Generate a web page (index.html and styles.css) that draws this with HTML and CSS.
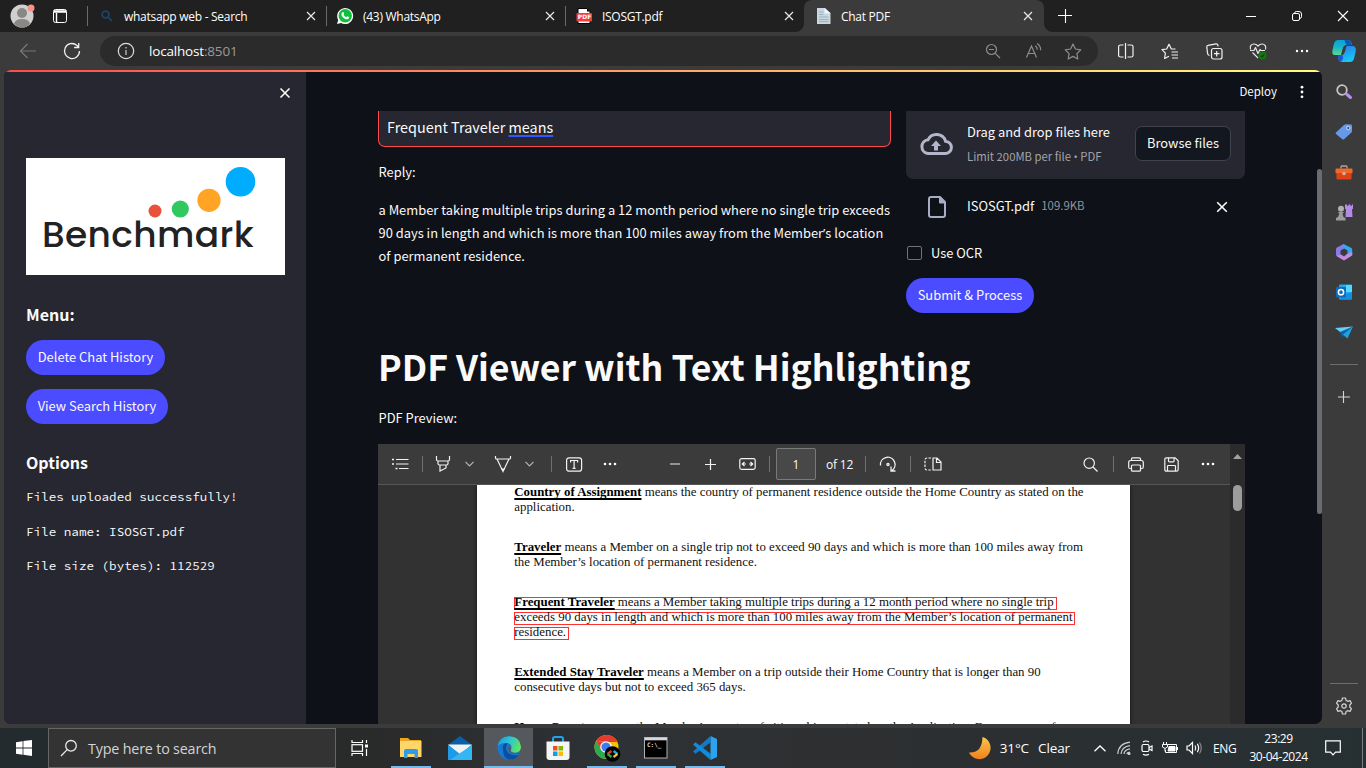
FILE: index.html
```html
<!DOCTYPE html>
<html lang="en">
<head>
<meta charset="utf-8">
<title>Chat PDF</title>
<link rel="stylesheet" href="styles.css">
</head>
<body>
<div class="tabbar">
  <div class="profile"><svg width="26" height="26" viewBox="0 0 26 26"><circle cx="12" cy="14" r="11.5" fill="#d2d0ce"/><circle cx="12" cy="11" r="5" fill="#8a8886"/><path d="M4 22q1-5 8-5t8 5q-3.500 3.500-8 3.500T4 22z" fill="#8a8886"/><circle cx="21" cy="6" r="3.500" fill="#f9938a"/></svg></div>
  <div class="workspace"><svg width="16" height="16" viewBox="0 0 16 16" fill="none" stroke="#fff"><rect x="1.500" y="1.500" width="13" height="13" rx="2"/><path d="M2 3h12M2 4h12M4.500 5v9" stroke-width="1.400"/></svg></div>
  <div class="tab"><svg class="fav" width="16" height="16" viewBox="0 0 16 16" fill="none" stroke="#1c4468" stroke-width="1.800"><circle cx="7.500" cy="6.500" r="3.400"/><path d="M10 9.200l4 4"/></svg><span class="tab-title">whatsapp web - Search</span><svg class="x" width="10" height="10" viewBox="0 0 10 10"><path d="M1 1l8 8M9 1l-8 8"/></svg></div>
  <div class="tab"><svg class="fav" width="16" height="16" viewBox="0 0 16 16"><path d="M0 16l1.200-4A8 8 0 1 1 4 14.900z" fill="#fff"/><circle cx="8.200" cy="7.800" r="6.700" fill="#0fbf3b"/><path d="M5.500 4.200c.8-.5 1.200 0 1.700 1.500l-.6 1c.7 1.300 1.500 2 2.800 2.600l1-1c1.500.6 2 1 1.600 2-1.500 2-4.500.8-6.300-1.300C4 7.200 4 5.200 5.500 4.200z" fill="#fff"/></svg><span class="tab-title">(43) WhatsApp</span><svg class="x" width="10" height="10" viewBox="0 0 10 10"><path d="M1 1l8 8M9 1l-8 8"/></svg></div>
  <div class="tab"><svg class="fav" width="16" height="16" viewBox="0 0 16 16"><path d="M2 .5h9l3 3v12H2z" fill="#fff" stroke="#000"/><path d="M11 .5v3h3z" fill="#000"/><rect x=".5" y="5" width="15.500" height="8.500" rx="1" fill="#f53c3c"/><text x="1.800" y="11.300" class="pdf-mark">PDF</text></svg><span class="tab-title">ISOSGT.pdf</span><svg class="x" width="10" height="10" viewBox="0 0 10 10"><path d="M1 1l8 8M9 1l-8 8"/></svg></div>
  <div class="tab active"><svg class="fav" width="16" height="16" viewBox="0 0 16 16"><path d="M2 0h8l5.500 5v11H2z" fill="#c8d8e0"/><path d="M9.500 0l6 5.500h-6z" fill="#eef6fa"/><path d="M4 4h4.500M4 6.500h4.500M4 9h9.500M4 11.500h9.500M4 13.500h9.500" stroke="#9cb3bf"/></svg><span class="tab-title">Chat PDF</span><svg class="x" width="10" height="10" viewBox="0 0 10 10"><path d="M1 1l8 8M9 1l-8 8"/></svg></div>
  <div class="newtab"><svg width="14" height="14" viewBox="0 0 14 14"><path d="M7.500 0v14M0 6.500h14" stroke="#fff" stroke-width="1.100"/></svg></div>
  <div class="winbtns">
    <div><svg width="10" height="10" viewBox="0 0 10 10"><path d="M0 5.500h10" stroke="#fff"/></svg></div>
    <div><svg width="10" height="10" viewBox="0 0 10 10" fill="none" stroke="#fff"><rect x=".5" y="2.500" width="7" height="7" rx="1.500"/><path d="M2.500 2.300Q2.700.5 4.300.5H7q2.500 0 2.500 2.500v2.700q0 1.600-1.800 1.800"/></svg></div>
    <div><svg width="10" height="10" viewBox="0 0 10 10"><path d="M0 0l10 10M10 0L0 10" stroke="#fff" stroke-width="1.100"/></svg></div>
  </div>
</div>

<div class="toolbar">
  <div class="nav first"><svg width="18" height="16" viewBox="0 0 18 16" fill="none" stroke="#777" stroke-width="1.200"><path d="M17 8H1.500M8.500 1l-7 7 7 7"/></svg></div>
  <div class="nav"><svg width="18" height="18" viewBox="0 0 18 18" fill="none" stroke="#f2f2f2" stroke-width="1.300"><path d="M16.500 9A7.500 7.500 0 1 1 13.700 3.200L15.500 5M15.700 1v4.500h-4.600"/></svg></div>
  <div class="urlbar">
    <svg class="info" width="18" height="18" viewBox="0 0 18 18" fill="none" stroke="#ddd" stroke-width="1.200"><circle cx="9" cy="9" r="7.700"/><path d="M9 8v5M9 5v1.500" stroke="#aaa" stroke-width="1.500"/></svg>
    <span class="url">localhost<i>:8501</i></span>
    <div class="cell40"><svg width="16" height="16" viewBox="0 0 16 16" fill="none" stroke="#8d8d8d" stroke-width="1.200"><circle cx="6.500" cy="6.500" r="5"/><path d="M10.300 10.300L15 15M4 6.500h5"/></svg></div>
    <div class="cell40"><svg width="18" height="16" viewBox="0 0 18 16" fill="none" stroke="#8d8d8d" stroke-width="1.200"><path d="M2.500 14.500L7.500 3l5 11.500M4.300 10.500h6.400M11.300 2.800q2 1.300 1.900 4M13 .5q3.800 2.200 3.600 6.800"/></svg></div>
    <div class="cell40"><svg width="18" height="17" viewBox="0 0 18 17" fill="none" stroke="#8d8d8d" stroke-width="1.200" stroke-linejoin="round"><path d="M9 1l2.400 5 5.400.8-3.900 3.800.9 5.400L9 13.400 4.200 16l.9-5.400L1.200 6.800 6.600 6z"/></svg></div>
  </div>
  <div class="actions">
    <div><svg width="16" height="16" viewBox="0 0 16 16" fill="none" stroke="#f2f2f2" stroke-width="1.200"><path d="M5.500 2h-3Q.6 2 .6 3.500v9Q.6 14 2.500 14h3M9.500 2h3.700Q15 2 15 3.500v9q0 1.500-1.800 1.500H9.500M7.500 0v16"/></svg></div>
    <div><svg width="18" height="17" viewBox="0 0 18 17" fill="none" stroke="#f2f2f2" stroke-width="1.200" stroke-linejoin="round"><path d="M14.500 6H10.300L8 1.200 5.700 6 1 6.700l3.400 3.500L3.600 15.500 8 13.200M10.500 9h6.500M10.500 12h6.500M11 15h6"/></svg></div>
    <div><svg width="17" height="17" viewBox="0 0 17 17" fill="none" stroke="#f2f2f2" stroke-width="1.200"><rect x="5.500" y="5.500" width="10.500" height="10.500" rx="2"/><path d="M10.700 8v5.500M8 10.700h5.500M3.500 12.500Q1.500 12 1.500 10L.8 4Q.7 2.500 2 2.300L10 .8q1.500-.2 1.800 1.200l.3 1.300"/></svg></div>
    <div><svg width="18" height="18" viewBox="0 0 18 18" fill="none" stroke="#e5e5e5" stroke-width="1.200" stroke-linejoin="round"><path d="M1.500 7.500Q.5 2.500 4.500 2 7 1.800 9 4q2-2.200 4.500-2 4 .5 3 5.500M1 8.500h4l1.500-3 2.500 6 2-4 1 1h4M3.500 10.500L9 16"/><circle cx="13.500" cy="13.500" r="4" fill="#0f7b0f" stroke="none"/><path d="M11.800 13.600l1.300 1.200 2.200-2.400" stroke="#2a2a2a"/></svg></div>
    <div><svg width="14" height="4" viewBox="0 0 14 4" fill="#fff"><circle cx="2" cy="2" r="1.200"/><circle cx="7" cy="2" r="1.200"/><circle cx="12" cy="2" r="1.200"/></svg></div>
    <div class="copilot"><svg width="24" height="24" viewBox="0 0 24 24"><defs><linearGradient id="ca" x1="0" y1="0" x2="0" y2="1"><stop offset="0" stop-color="#0aa0dc"/><stop offset=".5" stop-color="#1bb5c9"/><stop offset="1" stop-color="#58dc8c"/></linearGradient><linearGradient id="cb" x1="0" y1="0" x2=".4" y2="1"><stop offset="0" stop-color="#2a78e8"/><stop offset="1" stop-color="#16c8f4"/></linearGradient></defs><path d="M6 4Q7.500 1 10 1h6q3 0 4 4.500L13.500 6Q11.500 6.500 10.500 10L9 16H3Q-.5 16 .5 11L2 4.500Q3 1 6 1h6z" fill="url(#ca)"/><path d="M15.500 1q3.500 0 4 5h-4q-2 0-3-5z" fill="#0b57b8"/><path d="M18 20q-1.500 3-4 3H9.500Q6.500 23 6 17l4-.5q2-.5 3-4L14.500 7H21q3.500.5 2.700 5.500L22 19.500Q21 23 18 23h-5z" fill="url(#cb)"/><path d="M6 16.500h4.500q1.500 3-1.500 6.500-3-1-3-6.500z" fill="#1a55e0"/></svg></div>
  </div>
</div>

<div class="browser">
  <div class="page">
    <div class="decoration"></div>
    <div class="page-row">
      <aside class="side">
        <svg class="side-x" width="12" height="12" viewBox="0 0 12 12"><path d="M1.500 1.500l9 9M10.500 1.500l-9 9" stroke="#fafafa" stroke-width="1.600"/></svg>
        <div class="logo"><svg width="259" height="117" viewBox="0 0 259 117"><rect width="259" height="117" fill="#fff"/><circle cx="129" cy="53" r="6.500" fill="#e8523a"/><circle cx="154.300" cy="51" r="8.600" fill="#31c95f"/><circle cx="183" cy="42.300" r="11.600" fill="#ffa424"/><circle cx="214.500" cy="23.700" r="14.800" fill="#00acff"/></svg><span class="logo-text">Benchmark</span></div>
        <h3 class="menu-h">Menu:</h3>
        <button class="pill b1">Delete Chat History</button>
        <button class="pill b2">View Search History</button>
        <h3 class="opt-h">Options</h3>
        <p class="mono">Files uploaded successfully!</p>
        <p class="mono">File name: ISOSGT.pdf</p>
        <p class="mono">File size (bytes): 112529</p>
      </aside>
      <main class="main">
        <header class="st-header"><span>Deploy</span><svg width="4" height="14" viewBox="0 0 4 14" fill="#fff"><circle cx="2" cy="2.200" r="1.400"/><circle cx="2" cy="7" r="1.400"/><circle cx="2" cy="11.800" r="1.400"/></svg></header>
        <div class="content">
          <div class="cols">
            <div class="col-l">
              <div class="question"><span>Frequent Traveler <u>means</u></span></div>
              <p class="reply">Reply:</p>
              <p class="answer"><span>a Member taking multiple trips during a 12 month period where no single trip exceeds</span><br><span>90 days in length and which is more than 100 miles away from the Member<q>’</q>s location</span><br><span>of permanent residence.</span></p>
            </div>
            <div class="col-r">
              <div class="drop">
                <svg width="34" height="24" viewBox="0 0 34 24" fill="none" stroke="#b4b6ca" stroke-width="3"><path d="M9 21.500h17a6 6 0 0 0 .6-12.200A9.500 9.500 0 0 0 9 7.800 6.900 6.900 0 0 0 9 21.500z"/><path d="M17 8.500l5 5.500h-3v4.500h-4V14h-3z" fill="#b4b6ca" stroke="none"/></svg>
                <div class="drop-t"><div class="d1">Drag and drop files here</div><div class="d2">Limit 200MB per file <q>•</q> PDF</div></div>
                <button class="browse">Browse files</button>
              </div>
              <div class="file"><svg width="18" height="22" viewBox="0 0 18 22" fill="none" stroke="#a9acc4" stroke-width="2"><path d="M3 1h9l5 5v13q0 2-2 2H3q-2 0-2-2V3q0-2 2-2z" stroke-linejoin="round"/><path d="M11.500 1v6H17z" fill="#a9acc4" stroke-width="1"/></svg><span class="fn">ISOSGT.pdf</span><span class="fs">109.9KB</span><svg class="fx" width="12" height="12" viewBox="0 0 12 12"><path d="M1.200 1.200l9.600 9.600M10.800 1.200l-9.600 9.600" stroke="#fafafa" stroke-width="1.600"/></svg></div>
              <label class="ocr"><i></i><span>Use OCR</span></label>
              <button class="pill b3">Submit &amp; Process</button>
            </div>
          </div>
          <h1>PDF Viewer with Text Highlighting</h1>
          <p class="preview">PDF Preview:</p>
          <div class="viewer">
            <div class="viewer-main">
              <div class="pdfbar">
                <div class="w44"><svg width="18" height="14" viewBox="0 0 18 14"><path d="M5 2.500h12.500M5 7h12.500M8 11.500h9.500" stroke="#f2f2f2" stroke-width="1.200"/><path d="M1 1.700h2v1.600H1zM1 6.200h2v1.600H1zM4.500 10.700h2v1.600h-2z" fill="#f2f2f2"/></svg></div>
                <b class="sep"></b>
                <div class="w40"><svg width="16" height="18" viewBox="0 0 16 18" fill="none" stroke="#f2f2f2" stroke-width="1.200"><path d="M1.500 1v3.500q0 1.500 1.500 1.500h10q1.500 0 1.500-1.500V1M3 6v2.500q0 1.500 1.500 1.500h7q1.500 0 1.500-1.500V6M5 10v6l6-3v-3"/></svg></div>
                <div class="w12"><svg width="9" height="6" viewBox="0 0 9 6" fill="none" stroke="#b5b5b5" stroke-width="1.200"><path d="M.5.8l4 4 4-4"/></svg></div>
                <div class="w40 ml8"><svg width="18" height="18" viewBox="0 0 18 18" fill="none" stroke="#f2f2f2" stroke-width="1.200"><path d="M1.500 1v2q0 1 1 1h13q1 0 1-1V1M3 4l5 10.500h2L15 4"/><path d="M8 14l1 2.500 1-2.500z" fill="#ccc"/></svg></div>
                <div class="w12"><svg width="9" height="6" viewBox="0 0 9 6" fill="none" stroke="#b5b5b5" stroke-width="1.200"><path d="M.5.8l4 4 4-4"/></svg></div>
                <b class="sep ml16"></b>
                <div class="w44"><svg width="17" height="15" viewBox="0 0 17 15" fill="none" stroke="#f2f2f2" stroke-width="1.200"><rect x=".6" y=".8" width="15" height="13.400" rx="2.500"/><path d="M4.600 5.500v-2h7v2M8.100 3.500v8M6.600 11.300h3"/></svg></div>
                <div class="w28"><svg width="14" height="4" viewBox="0 0 14 4" fill="#fff"><circle cx="2" cy="2" r="1.300"/><circle cx="7" cy="2" r="1.300"/><circle cx="12" cy="2" r="1.300"/></svg></div>
                <div class="w36 ml33"><svg width="10" height="2" viewBox="0 0 10 2"><path d="M0 1h10" stroke="#aaa" stroke-width="1.600"/></svg></div>
                <div class="w36"><svg width="12" height="11" viewBox="0 0 12 11"><path d="M5.500 0v11M0 5.500h11" stroke="#f2f2f2" stroke-width="1.200"/></svg></div>
                <div class="w36"><svg width="17" height="12" viewBox="0 0 17 12" fill="none" stroke="#f2f2f2" stroke-width="1.200"><rect x=".8" y=".6" width="15.400" height="10.800" rx="1.800"/><path d="M3 6h4M14 6h-4M5.500 4L3.300 6l2.200 2M11.500 4l2.200 2-2.200 2"/></svg></div>
                <b class="sep ml4"></b>
                <div class="pnum">1</div>
                <span class="of">of 12</span>
                <b class="sep sep-of"></b>
                <div class="w36 ml4"><svg width="18" height="17" viewBox="0 0 18 17" fill="none" stroke="#f2f2f2" stroke-width="1.300"><path d="M1.500 9.500A7.300 7.300 0 1 1 13 14.500M12 10.500v4.500h4.500"/><circle cx="9" cy="8.500" r="1.100"/></svg></div>
                <b class="sep ml4"></b>
                <div class="w36 ml4"><svg width="18" height="14" viewBox="0 0 18 14" fill="none" stroke="#f2f2f2" stroke-width="1.200"><path d="M7 1H3Q1 1 1 3v8q0 2 2 2h4" stroke-dasharray="2.500 1.300"/><path d="M9 1h4l4 4v8H9zM12.500 1v4.500H17"/></svg></div>
                <div class="grow"></div>
                <div class="w36"><svg width="16" height="15" viewBox="0 0 16 15" fill="none" stroke="#f2f2f2" stroke-width="1.200"><circle cx="6.200" cy="6.200" r="5.200"/><path d="M10 10l4.500 4.500"/></svg></div>
                <b class="sep ml4"></b>
                <div class="w36 ml4"><svg width="16" height="15" viewBox="0 0 16 15" fill="none" stroke="#f2f2f2" stroke-width="1.200"><path d="M3.500 3.500V2q0-1.200 1.200-1.200h6.600q1.200 0 1.200 1.200v1.500M3.500 11.500H2Q.7 11.500.7 10V5.500q0-2 2-2h10.600q2 0 2 2V10q0 1.500-1.300 1.500h-1.500"/><rect x="3.500" y="8" width="9" height="6.200" rx="1"/></svg></div>
                <div class="w36"><svg width="16" height="15" viewBox="0 0 16 15" fill="none" stroke="#f2f2f2" stroke-width="1.200"><path d="M2.500.8h8.700l3 3v8.700q0 1.700-1.700 1.700h-10q-1.700 0-1.700-1.700v-10Q.8.8 2.500.8zM3.500 14V9.300q0-.8.800-.8h6.400q.8 0 .8.800V14M4.500 1v3q0 .8.800.8h4q.8 0 .8-.8V1"/></svg></div>
                <div class="w36 mr4"><svg width="14" height="4" viewBox="0 0 14 4" fill="#fff"><circle cx="2" cy="2" r="1.300"/><circle cx="7" cy="2" r="1.300"/><circle cx="12" cy="2" r="1.300"/></svg></div>
              </div>
              <div class="pdfbody">
                <div class="sheet">
                  <p><span><b>Country of Assignment</b> means the country of permanent residence outside the Home Country as stated on the</span><br><span>application.</span></p>
                  <p><span><b>Traveler</b> means a Member on a single trip not to exceed 90 days and which is more than 100 miles away from</span><br><span>the Member’s location of permanent residence.</span></p>
                  <p class="marked"><span class="m m1"><b>Frequent Traveler</b> means a Member taking multiple trips during a 12 month period where no single trip</span><span class="m m2">exceeds 90 days in length and which is more than 100 miles away from the Member’s location of permanent</span><span class="m m3">residence.</span></p>
                  <p><span><b>Extended Stay Traveler</b> means a Member on a trip outside their Home Country that is longer than 90</span><br><span>consecutive days but not to exceed 365 days.</span></p>
                  <p><span class="p4"><b>Home Country</b> means the Member’s country of citizenship as stated on the Application. For purposes of</span></p>
                </div>
              </div>
            </div>
            <div class="pdfscroll"><svg width="9" height="5" viewBox="0 0 9 5"><path d="M0 5L4.500 0 9 5z" fill="#a0a0a0"/></svg><i></i></div>
          </div>
        </div>
        <i class="thumb"></i>
      </main>
    </div>
  </div>
  <div class="edgebar">
    <div><svg width="18" height="18" viewBox="0 0 18 18" fill="none"><circle cx="7" cy="7" r="4.800" stroke="#c4c4c4" stroke-width="1.800"/><path d="M11.500 11l4 3.500" stroke="#b58cf0" stroke-width="3" stroke-linecap="round"/></svg></div>
    <div><svg width="18" height="18" viewBox="0 0 18 18"><path d="M1 9.500L9 2q.8-.8 2-.8L16 1.500q1 .1 1 1.200V8q0 1-.8 1.800L9 16.300q-.8.700-1.600 0L1 11q-.8-.7 0-1.500z" fill="#6699e8"/><circle cx="13.300" cy="5" r="1.700" fill="#35507c" stroke="#cfe0ff"/></svg></div>
    <div><svg width="18" height="18" viewBox="0 0 18 18"><path d="M6 5.500V4Q6 3 7 3h4q1 0 1 1v1.500" fill="none" stroke="#a9a9a9" stroke-width="1.300"/><rect x=".5" y="5.500" width="17" height="5" rx="1" fill="#f5662a"/><rect x="1.500" y="10" width="15" height="6.500" rx="1" fill="#dd4317"/><circle cx="9" cy="10.500" r="1.800" fill="#c9b5aa"/></svg></div>
    <div><svg width="18" height="18" viewBox="0 0 18 18"><path d="M10 1.500h2v1.200h1.500V1.500h2v1.200H17V1.500h1V6h-1l.5 8h-7L11 6h-1z" fill="#b58be8"/><circle cx="6" cy="5.800" r="3" fill="#b0b0b0"/><path d="M3 9h6l-1.500 1.800 1 3.200 2 1v2.500H1V15l2-1 1.300-3.200z" fill="#9c9c9c"/></svg></div>
    <div><svg width="18" height="18" viewBox="0 0 18 18"><path d="M8.500 1L2 4.500Q1 5 1 6.500v6L5.500 15V7.500L12 4z" fill="#8a79e8"/><path d="M8.500 1L16 4.700q1.200.6 1.200 2V12l-4.700-1.500V7.500L7 4z" fill="#35a7ee"/><path d="M17.200 9v3.500L10 17q-1 .5-2 0l-6.500-4 4.500-1.500L9 13.500l3.500-3z" fill="#c48ae0"/></svg></div>
    <div><svg width="18" height="18" viewBox="0 0 18 18"><rect x="4" y="1.500" width="13" height="15" rx="1" fill="#28a8ea"/><path d="M11 2h6v7h-6z" fill="#50d9ff"/><path d="M5 13l12-4v6.500q0 1-1 1H6z" fill="#1490df"/><rect x="1" y="4" width="10" height="10.500" rx="1" fill="#0f6cbd"/><circle cx="6" cy="9.200" r="2.600" fill="none" stroke="#fff" stroke-width="1.500"/></svg></div>
    <div><svg width="18" height="18" viewBox="0 0 18 18"><path d="M0 5L18 3.500 6.500 10z" fill="#69cdf5"/><path d="M18 3.500L12.500 15.500 7 11z" fill="#1e9fe0"/><path d="M5 9L18 3.500 8 11.500V15z" fill="#0a64a8"/></svg></div>
    <hr>
    <div class="eplus"><svg width="12" height="12" viewBox="0 0 12 12"><path d="M5.500 0v12M0 6h12" stroke="#d5d5d5" stroke-width="1.100"/></svg></div>
    <hr class="hr2">
    <div class="gear"><svg width="18" height="18" viewBox="0 0 18 18" fill="none" stroke="#d5d5d5" stroke-width="1.200" stroke-linejoin="round"><path d="M7.500 1h3l.6 2.400 1.500.9L15 3.600l1.500 2.600L14.800 8v2l1.700 1.800-1.500 2.600-2.400-.7-1.500.9-.6 2.400h-3l-.6-2.400-1.500-.9-2.400.7-1.500-2.600L3.200 10V8L1.500 6.200 3 3.600l2.400.7 1.500-.9z"/><circle cx="9" cy="9" r="2.200"/></svg></div>
  </div>
</div>

<div class="taskbar">
  <div class="start"><svg width="16" height="16" viewBox="0 0 16 16" fill="#fff"><path d="M0 2.200L6.600 1.300v6.300H0zM7.400 1.100L16 0v7.600H7.400zM0 8.400h6.600v6.300L0 13.800zM7.400 8.400H16V16l-8.600-1.200z"/></svg></div>
  <div class="search"><svg width="18" height="18" viewBox="0 0 18 18" fill="none" stroke="#e8e8e8" stroke-width="1.300"><circle cx="11" cy="6.800" r="5.300"/><path d="M7.200 10.600L1 17"/></svg><span>Type here to search</span></div>
  <div class="tv"><svg width="18" height="16" viewBox="0 0 18 16" fill="none" stroke="#fff" stroke-width="1.200"><path d="M1 0v2.500h10.500V0M1 16v-2.500h10.500V16M15.500 0v3M15.500 9v7"/><rect x="1" y="4.700" width="10.500" height="6.600"/><path d="M14 4.500h3v3h-3z" fill="#fff" stroke="none"/></svg></div>
  <div class="app run"><svg width="24" height="24" viewBox="0 0 24 24"><path d="M1 2h8l2 2h11v17H1z" fill="#e9a820"/><path d="M1 5h21.500v16H1z" fill="#ffd667"/><path d="M5 22v-7q0-2 2-2h10q2 0 2 2v7h-3.500v-4h-7v4z" fill="#2f9bea"/></svg></div>
  <div class="app"><svg width="24" height="24" viewBox="0 0 24 24"><path d="M0 9L12 0l12 9v4H0z" fill="#0a5fa8"/><path d="M0 8.500h24L12 19z" fill="#f0f2f4"/><path d="M0 9l12 9 12-9v15H0z" fill="#1e9be6"/><path d="M24 9v15H2z" fill="#35b5f3"/></svg></div>
  <div class="app run on"><svg width="24" height="24" viewBox="0 0 24 24"><defs><linearGradient id="eg" x1="0" y1=".3" x2="1" y2=".6"><stop offset="0" stop-color="#1c9ee0"/><stop offset=".5" stop-color="#30c6cf"/><stop offset="1" stop-color="#66e556"/></linearGradient></defs><circle cx="12" cy="12" r="11.500" fill="#1579cf"/><path d="M.6 10.500Q2 .5 12 .3q11 .2 12 10.500 0 5.500-6 6-5 0-4-3Q16 8 10 7 3 6.500.6 10.500z" fill="url(#eg)"/><path d="M6 13q-1-6 5-6-3 3.500-1.500 7.500 2.500 6 12 4.500-3 5-9.500 4.500-6-1-6-10.500z" fill="#0c4da0"/><path d="M12 9.500q-2 3.500.5 6.500 3.500 3 10.500 1.500l1.500-1.500q-4 1.500-8 .7-4-1-2.500-3.700.7-1.500-2-3.500z" fill="#55595e"/></svg></div>
  <div class="app"><svg width="24" height="24" viewBox="0 0 24 24"><path d="M7 6V3q0-2 2-2h6q2 0 2 2v3" fill="none" stroke="#22a5e8" stroke-width="2"/><path d="M.5 5.500h23V21q0 3-3 3h-17q-3 0-3-3z" fill="#f5f5f5"/><path d="M7 10h4.500v4.500H7z" fill="#f25022"/><path d="M12.500 10H17v4.500h-4.500z" fill="#7fba00"/><path d="M7 15.500h4.500V20H7z" fill="#00a4ef"/><path d="M12.500 15.500H17V20h-4.500z" fill="#ffb900"/></svg></div>
  <div class="app run"><svg width="27" height="28" viewBox="0 0 27 28"><circle cx="13.500" cy="13" r="12" fill="#f4c20d"/><path d="M3.100 7A12 12 0 0 1 24.500 8h-11z" fill="#e33b2e"/><path d="M3.100 7A12 12 0 0 0 12.500 25l4-8-8-1z" fill="#2da94f"/><path d="M3.100 7l5.400 9 2-8z" fill="#e33b2e"/><circle cx="13" cy="13" r="5.800" fill="#fff"/><circle cx="13" cy="13" r="4.600" fill="#3c7df0"/><circle cx="19.500" cy="20" r="7.800" fill="#000"/><path d="M18.500 17L14.500 20" stroke="#e63c2e" stroke-width="2.200"/><path d="M14.500 20l4 3" stroke="#2ca94f" stroke-width="2.200"/><path d="M20.500 17l4 3" stroke="#2ba5dd" stroke-width="2.200"/><path d="M24.500 20l-4 3" stroke="#f3c414" stroke-width="2.200"/></svg></div>
  <div class="app run"><svg width="24" height="22" viewBox="0 0 24 22"><rect x=".5" y=".5" width="22.500" height="20.500" fill="#000" stroke="#aeb2b4"/><path d="M1 2h22" stroke="#d5d8da" stroke-width="2.600"/><text x="3" y="10" class="cmd-mark">C:\_</text></svg></div>
  <div class="app run"><svg width="24" height="24" viewBox="0 0 24 24"><path d="M17.500 0L24 3v18l-6.500 3z" fill="#2ba3ee"/><path d="M17.500 0L0 15.500l2.500 2.300L18 6z" fill="#1679c4"/><path d="M17.500 24L0 8.500l2.500-2.300L18 18z" fill="#0f8ddb"/></svg></div>
  <div class="grow"></div>
  <div class="weather"><svg width="24" height="24" viewBox="0 0 24 24"><defs><linearGradient id="mg" x1="0" y1="0" x2="0" y2="1"><stop offset="0" stop-color="#ffc64a"/><stop offset="1" stop-color="#f0811c"/></linearGradient></defs><path d="M14.500 1A11.300 11.300 0 1 1 1 16.500Q14 17.500 14.500 1z" fill="url(#mg)"/></svg><span class="w1">31°C</span><span class="w2">Clear</span></div>
  <div class="tray">
    <div class="c1"><svg width="12" height="7" viewBox="0 0 12 7" fill="none" stroke="#fff" stroke-width="1.300"><path d="M.5 6.300L6 1l5.500 5.300"/></svg></div>
    <div><svg width="14" height="14" viewBox="0 0 14 14" fill="none" stroke="#ccc" stroke-width="1.200"><path d="M.8 13Q1.500 2.500 13 1.200M4 13q.7-7.300 9-8.300M7 13q.5-4.500 6-5.200M9.800 13q.3-1.700 3-2"/><circle cx="12" cy="12.500" r="1" fill="#fff"/></svg></div>
    <div><svg width="14" height="16" viewBox="0 0 14 16" fill="none" stroke="#fff" stroke-width="1.200"><rect x="2" y="4.500" width="7" height="7" rx="1.500"/><path d="M9 7.500l3-1.500v4.500L9 9M3 2q3-2 6 0M3 14.200q3 1.800 6 0"/></svg></div>
    <div><svg width="17" height="12" viewBox="0 0 17 12" fill="none" stroke="#fff"><path d="M5.500 2.500h9v8h-11V8"/><path d="M7 4.500h6v4.500H6z" fill="#fff"/><path d="M15.500 5v3M1.500 0v2.500M4.500 0v2.500M.5 2.500h5V5L3 6.500.5 5zM3 6.500v3"/></svg></div>
    <div><svg width="17" height="14" viewBox="0 0 17 14" fill="none" stroke="#fff" stroke-width="1.200"><path d="M1 5v4h2l3.500 3.500v-11L3 5zM9 4.500q1.500 2.500 0 5M11.300 2.800q2.700 4.200 0 8.400"/><path d="M13.500 1.500q3.500 5.500 0 11" stroke="#888"/></svg></div>
  </div>
  <span class="eng">ENG</span>
  <div class="clock"><span>23:29</span><span>30-04-2024</span></div>
  <div class="notif"><svg width="16" height="16" viewBox="0 0 16 16" fill="none" stroke="#fff" stroke-width="1.200"><path d="M.7.8h14.600v11.400H10.500L8 14.800l-2.500-2.600H.7z"/></svg></div>
  <i class="peek"></i>
</div>
</body>
</html>
```
FILE: styles.css
```css
* { box-sizing: border-box; }
body { margin: 0; width: 1366px; height: 768px; overflow: hidden; display: flex; flex-direction: column; background: #3b3b3b; font-family: "Open Sans", "Noto Sans", sans-serif; color: #fff; }
svg { display: block; flex: none; overflow: visible; }
p, h1, h3 { margin: 0; }
button { border: 0; padding: 0; font: inherit; color: inherit; }
span { white-space: nowrap; }
q { quotes: none; font-family: "Open Sans", sans-serif; line-height: 1; }
.grow { flex: 1; }

/* tab strip */
.tabbar { height: 32px; flex: none; display: flex; background: #202020; }
.profile { width: 48px; padding: 2px 0 0 10px; }
.workspace { width: 39px; padding: 8px 0 0 4px; }
.tab { width: 239px; display: flex; align-items: center; padding: 0 10px 0 11px; position: relative; font-size: 12px; letter-spacing: -.28px; }
.tab::before { content: ""; position: absolute; left: 0; top: 6px; width: 1px; height: 20px; background: #6a6a6a; }
.tab.active { width: 240px; padding-right: 11px; background: #3b3b3b; border-radius: 8px 8px 0 0; }
.tab.active::before { left: -8px; top: 24px; width: 256px; height: 8px; background: radial-gradient(circle at 0 0, transparent 7.5px, #3b3b3b 8px) left / 8px 8px no-repeat, radial-gradient(circle at 100% 0, transparent 7.5px, #3b3b3b 8px) right / 8px 8px no-repeat; }
.fav { margin-right: 10px; }
.tab-title { flex: 1; }
.x { stroke: #e8e8e8; stroke-width: 1.2; }
.pdf-mark { font: bold 6px "DejaVu Sans", sans-serif; fill: #fff; letter-spacing: 0; }
.newtab { width: 42px; padding: 9px 0 0 14px; }
.winbtns { margin-left: auto; display: flex; }
.winbtns div { width: 46px; display: flex; justify-content: center; align-items: center; }

/* address row */
.toolbar { height: 38px; flex: none; display: flex; align-items: center; }
.nav { width: 44px; display: flex; justify-content: center; }
.nav.first { margin-left: 6px; }
.urlbar { width: 998px; height: 30px; margin-left: 6px; border-radius: 15px; background: #2b2b2b; display: flex; align-items: center; padding: 0 5px 0 17px; }
.url { flex: 1; margin-left: 14px; font-size: 13.5px; letter-spacing: -.18px; }
.url i { font-style: normal; color: #9a9a9a; }
.cell40 { width: 40px; display: flex; justify-content: center; }
.actions { margin-left: 6px; display: flex; align-items: center; }
.actions div { width: 44px; display: flex; justify-content: center; }
.actions .copilot { width: 40px; }

.browser { height: 658px; flex: none; display: flex; padding-left: 4px; }
.page { width: 1318px; height: 654px; border-radius: 7px; overflow: hidden; background: #0e1117; font-family: "Noto Sans CJK SC", "Noto Sans CJK JP", sans-serif; font-size: 12.9px; color: #fafafa; }
.decoration { height: 2px; background: linear-gradient(90deg, #ff4b4b, #fffd80); }
.page-row { display: flex; height: 652px; }

/* sidebar */
.side { width: 302px; background: #262730; padding: 15px 21px 0 22px; }
.side-x { margin-left: 253px; }
.logo { width: 259px; height: 117px; margin-top: 59px; position: relative; }
.logo-text { position: absolute; left: 16px; top: 47px; font: 500 36px/60px "Poppins", "Lato", sans-serif; color: #222; letter-spacing: .35px; }
.side h3 { font-size: 16px; line-height: 22px; font-weight: 700; }
.menu-h { margin-top: 28px; }
.pill { display: flex; align-items: center; justify-content: center; height: 35px; padding-bottom: 2px; border-radius: 18px; background: #4b4bff; white-space: nowrap; }
.b1 { width: 139px; margin-top: 15px; }
.b2 { width: 142px; margin-top: 14px; }
.opt-h { margin-top: 27px; margin-bottom: 14px; }
.mono { font: 12.6px/20px "Source Code Pro", "DejaVu Sans Mono", monospace; height: 34.500px; white-space: pre; }

/* main pane */
.main { flex: 1; position: relative; min-width: 0; }
.st-header { height: 39px; display: flex; justify-content: flex-end; align-items: center; padding: 0 18px 0 0; gap: 23px; font-size: 11.5px; }
.st-header span { padding-bottom: 1px; }
.content { height: 613px; overflow: hidden; padding-left: 72px; }
.cols { display: flex; gap: 15px; height: 224px; }
.col-l { width: 513px; }
.question { height: 36px; border: 1px solid #ff4b4b; border-top: 0; border-radius: 0 0 7px 7px; background: #262730; font-size: 14.4px; display: flex; align-items: center; padding: 0 0 4px 8px; }
.question u { text-decoration: underline 2px #3355ff; text-underline-offset: 2px; text-decoration-skip-ink: none; }
.reply { margin-top: 13px; line-height: 23px; }
.answer { margin-top: 15px; line-height: 23px; }
.reply, .answer, .preview { padding-left: .5px; }
.col-r { width: 339px; }
.drop { height: 68px; background: #262730; border-radius: 0 0 7px 7px; display: flex; align-items: center; padding: 0 14px 3px 13px; }
.drop-t { margin-left: 14px; flex: 1; }
.d1 { line-height: 22px; }
.d2 { line-height: 20px; font-size: 11.3px; color: #a3a4aa; padding-top: 3px; }
.browse { width: 96px; height: 35px; padding-bottom: 3px; border: 1px solid #41444e; border-radius: 7px; background: #131720; }
.file { display: flex; height: 54px; align-items: center; padding: 0 17px 0 22px; }
.file svg { position: relative; top: 1px; }
.fn { margin-left: 21px; padding-bottom: 2px; }
.fs { margin-left: 7px; padding-bottom: 2px; font-size: 11.4px; color: #94959c; }
.ocr { display: flex; align-items: center; height: 22px; margin-top: 9px; padding-left: 1px; gap: 9px; }
.ocr span { padding-bottom: 2px; }
.ocr i { width: 15px; height: 14px; border: 1px solid #71737c; border-radius: 2px; }
.file .fx { margin-left: auto; }
.b3 { width: 128px; margin-top: 14px; }
h1 { font-size: 35.6px; line-height: 44px; margin-top: 9px; font-weight: 700; }
.preview { margin-top: 18px; line-height: 23px; }
.viewer { display: flex; width: 867px; margin-top: 15px; height: 280px; }
.viewer-main { width: 852px; }
.thumb { position: absolute; right: 0; top: 97px; width: 5px; height: 345px; border-radius: 3px; background: #6b6c71; }

/* pdf viewer */
.pdfbar { height: 41px; background: #3b3b3b; border-bottom: 1px solid #555; display: flex; align-items: center; font-family: "Open Sans", sans-serif; font-size: 12px; }
.pdfbar div { display: flex; justify-content: center; }
.w44 { width: 44px; } .w40 { width: 40px; } .w12 { width: 12px; } .w28 { width: 28px; } .w36 { width: 36px; }
.ml4 { margin-left: 4px; } .ml8 { margin-left: 8px; } .ml16 { margin-left: 16px; } .ml33 { margin-left: 33px; } .mr4 { margin-right: 4px; }
.sep { width: 1px; height: 16px; background: #707070; }
.pdfbar .pnum { width: 40px; height: 32px; margin-left: 6px; border: 1px solid #7a7a7a; border-radius: 2px; background: #484848; align-items: center; }
.of { width: 28px; margin-left: 10px; letter-spacing: -.2px; }
.sep-of { margin-left: 11px; }
.pdfbody { height: 239px; background: #323232; padding-left: 99px; overflow: hidden; }
.sheet { width: 653px; height: 300px; padding-left: 37.3px; background: #fff; box-shadow: 0 0 4px #111; color: #111; font: 12.87px/15px "Liberation Serif", serif; }
.sheet p { margin-bottom: 25px; }
.sheet b { color: #000; text-decoration: underline 2px; text-underline-offset: 1.5px; text-decoration-skip-ink: none; }
.m { display: block; height: 13px; line-height: 11px; margin-bottom: 2px; box-shadow: inset 0 0 0 1px #ff3030; }
.sheet p.marked { padding-top: 2px; }
.m1 { width: 543px; } .m2 { width: 561px; } .m3 { width: 55px; }
.pdfscroll { width: 15px; background: #2b2b2b; padding: 10px 0 0 3px; }
.pdfscroll i { display: block; width: 9px; height: 26px; margin-top: 26px; border-radius: 5px; background: #9c9c9c; }

/* browser side rail */
.edgebar { width: 44px; display: flex; flex-direction: column; align-items: center; padding-top: 2px; }
.edgebar div { height: 40px; display: flex; align-items: center; }
.edgebar hr { width: 28px; height: 1px; border: 0; margin: 12px 0 0; background: #6e6e6e; }
.edgebar .eplus { margin-top: 12px; }
.edgebar .hr2 { margin-top: auto; }
.edgebar .gear { height: 44px; }

/* taskbar */
.taskbar { height: 40px; flex: none; display: flex; background: linear-gradient(90deg, #232b2f, #2a2a2a 28%, #2d3236 45%, #2e2f31 60%, #2b2f31 75%, #263033); align-items: stretch; }
.taskbar > div { display: flex; align-items: center; }
.start { width: 48px; justify-content: center; }
.search { width: 288px; background: #333; border: 1px solid #666; padding-left: 11px; font-size: 14.3px; letter-spacing: -.17px; color: #d4d4d4; }
.search span { margin-left: 10px; }
.tv { width: 48px; justify-content: center; margin-right: 2px; }
.app { width: 49px; justify-content: center; position: relative; }
.app.on { background: #55595e; }
.app.run::after { content: ""; position: absolute; left: 5px; right: 4px; bottom: 0; height: 2px; background: #76b9ed; }
.app.on::after { left: 0; right: 0; }
.cmd-mark { font: bold 6px "DejaVu Sans Mono", monospace; fill: #ddd; }
.weather { font-size: 13.5px; margin-right: 18px; letter-spacing: -.1px; }
.w1 { margin-left: 8px; } .w2 { margin-left: 9px; }
.tray div { width: 23.5px; display: flex; justify-content: center; }
.tray .c1 { width: 24px; }
.eng { align-self: center; margin-left: 7px; width: 24px; font-size: 12px; letter-spacing: -.4px; }
.taskbar .clock { width: 83px; flex-direction: column; justify-content: center; font-size: 12px; line-height: 18px; letter-spacing: -.45px; }
.notif { width: 26px; justify-content: center; }
.peek { width: 1px; margin: 0 3px 0 16px; background: #7c8082; }
```
